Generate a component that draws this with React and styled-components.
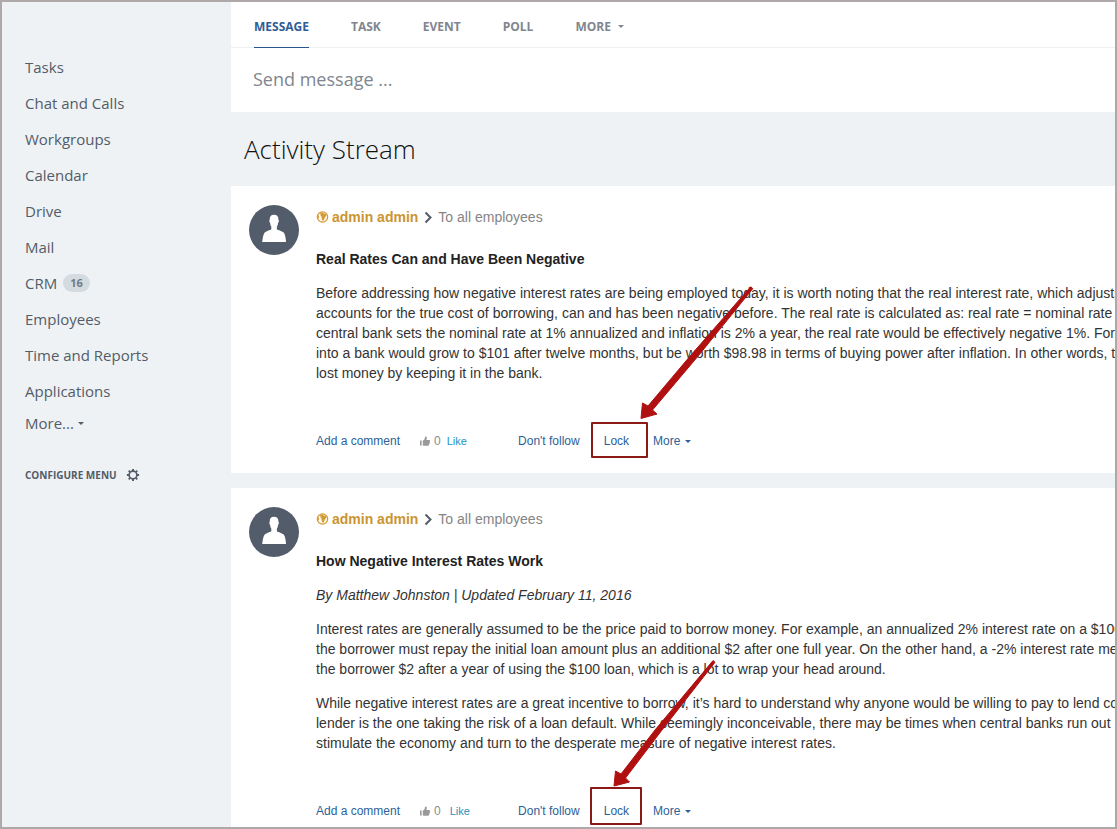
import styled, { createGlobalStyle, css } from 'styled-components';

const GlobalStyle = createGlobalStyle`
  *, *::before, *::after {
    box-sizing: border-box;
  }

  body {
    margin: 0;
    font-family: 'Liberation Sans', Arial, sans-serif;
    font-size: 14px;
    line-height: 20px;
    color: #333;
    background: #eef2f4;
  }

  a {
    color: inherit;
    text-decoration: none;
  }

  button, input {
    margin: 0;
    padding: 0;
    border: 0;
    font: inherit;
    color: inherit;
    background: none;
  }

  button {
    cursor: pointer;
    white-space: nowrap;
  }

  h1, h2, p, ul {
    margin: 0;
    padding: 0;
  }
`;

const Frame = styled.div`
  display: flex;
  height: 100vh;
  overflow: hidden;
  border: 2px solid #aea8a8;
  background: #eef2f4;
`;

/* ---------- sidebar ---------- */

const Sidebar = styled.nav`
  flex: 0 0 229px;
  padding: 47px 16px 0 23px;
  font-family: 'Open Sans', sans-serif;
  color: #535c69;
`;

const MenuList = styled.ul`
  list-style: none;
  font-size: 15px;
`;

const MenuItem = styled.li`
  display: flex;
  align-items: center;
  gap: 6px;
  height: 36px;
`;

const Counter = styled.span`
  padding: 0 7px;
  border-radius: 9px;
  font-size: 11px;
  font-weight: 700;
  line-height: 18px;
  color: #6f7a84;
  background: #d4dbe0;
`;

const MoreItems = styled.button`
  display: flex;
  align-items: center;
  gap: 4px;
  height: 28px;
  font-size: 15px;
`;

const Configure = styled.button`
  display: flex;
  align-items: center;
  gap: 9px;
  margin-top: 28px;
  font-size: 10px;
  font-weight: 700;
`;

const Caret = styled.span`
  width: 0;
  border: 3px solid transparent;
  border-top-color: currentColor;
  border-bottom: 0;
`;

/* ---------- main column ---------- */

const Main = styled.main`
  flex: 1;
  min-width: 0;
`;

const Composer = styled.section`
  font-family: 'Open Sans', sans-serif;
  background: #fff;
`;

const Tabs = styled.div`
  display: flex;
  gap: 42px;
  height: 46px;
  padding: 0 23px;
  border-bottom: 1px solid #edeff0;
`;

const Tab = styled.button`
  display: flex;
  align-items: center;
  gap: 7px;
  height: 46px;
  padding-top: 4px;
  border-bottom: 1px solid transparent;
  font-size: 12px;
  font-weight: 700;
  color: #80868e;

  ${({ $active }) => $active && css`
    color: #2f5d96;
    border-bottom-color: #2a5687;
  `}
`;

const MessageInput = styled.input`
  display: block;
  width: 100%;
  height: 64px;
  padding: 0 22px 2px;
  font-size: 18px;
  outline: none;

  &::placeholder {
    color: #80868e;
    opacity: 1;
  }
`;

const PageTitle = styled.h1`
  padding: 17px 13px;
  font-family: 'Open Sans', sans-serif;
  font-size: 26px;
  font-weight: 300;
  line-height: 40px;
  color: #111;
`;

const Feed = styled.div`
  display: flex;
  flex-direction: column;
  gap: 15px;
`;

const Card = styled.article`
  display: flex;
  gap: 17px;
  padding: 19px 0 22px 18px;
  background: #fff;
`;

const Body = styled.div`
  flex: 1;
  min-width: 0;
  padding-top: 2px;
`;

const PostHeader = styled.header`
  display: flex;
  align-items: center;
  margin-bottom: 22px;
`;

const Author = styled.a`
  display: flex;
  align-items: center;
  gap: 3px;
  font-weight: 700;
  color: #cb9431;
`;

const Chevron = styled.svg`
  margin: 0 4px 0 5px;
`;

const Recipient = styled.span`
  color: #858585;
`;

const PostTitle = styled.h2`
  font-size: 14px;
  line-height: 20px;
  color: #222;
`;

const Paragraph = styled.p`
  margin-top: 14px;
  white-space: nowrap;
  overflow: hidden;
  font-style: ${({ $italic }) => ($italic ? 'italic' : 'normal')};
`;

const Line = styled.span`
  display: block;
`;

const Actions = styled.footer`
  display: flex;
  align-items: center;
  margin-top: 48px;
  font-size: 12px;
  color: #2c5f97;
`;

const Votes = styled.div`
  display: flex;
  align-items: center;
  gap: 4px;
  flex: 0 0 98px;
  margin-left: 20px;
  color: #8c8c8c;
`;

const Like = styled.button`
  margin-left: ${({ $wide }) => ($wide ? 5 : 2)}px;
  font-size: 11px;
  color: #1f93c4;
`;

const Links = styled.div`
  display: flex;
  gap: 24px;
`;

const LockSlot = styled.div`
  position: relative;
`;

const MoreAction = styled.button`
  display: flex;
  align-items: center;
  gap: 5px;
`;

/* callout drawn over the post, anchored on the Lock link */
const Callout = styled.svg`
  position: absolute;
  left: -21px;
  bottom: -9px;
  overflow: visible;
  pointer-events: none;
`;

const Avatar = () => (
  <svg width="50" height="50" viewBox="0 0 50 50" role="img" aria-label="admin admin">
    <circle cx="25" cy="25" r="25" fill="#535c6b" />
    <path
      fill="#fff"
      d="M25 9.800c-3 0-4.500 1.900-4.300 5.100-.7.500-.4 2.300.4 2.900.2 1.900.6 3 1.200 3.800v2.600c-1.200 1.100-5.400 1.700-6.800 3.600-1.300 1.800-1.900 5.600-2.300 9.200h23.800c-.2-3.600-.8-7.400-2.100-9.200-1.400-1.900-5.800-2.500-7-3.600v-2.600c.6-.8 1-1.900 1.200-3.800.8-.6 1.100-2.400.4-2.900.1-3.200-1.500-5.100-4.500-5.100z"
    />
  </svg>
);

const Globe = () => (
  <svg width="13" height="13" viewBox="0 0 13 13" aria-hidden="true">
    <circle cx="6.500" cy="6" r="5.200" fill="#fdf6e6" stroke="#d39a35" strokeWidth="1.200" />
    <path
      fill="#d39a35"
      d="M3.400 2.200 4.800 3 4.200 4 5.300 5.200 6 8.400 7 9.900 8.300 8.200 8.800 6.400 10.400 4.600 9.600 2.400 7.800 2.700 6.700 1.500zM1.300 4.200 2.600 4.600 3.200 6.200 2.200 7.400 1.300 6.800z"
    />
  </svg>
);

const Thumb = () => (
  <svg width="10" height="11" viewBox="0 0 10 11" aria-hidden="true">
    <path
      fill="#999"
      d="M0 4.500h1.600V9.600H0zM2.800 4.600C4 4.200 4.800 2.800 5 1.200 5.100.3 6.700.4 6.800 1.700c.1.900-.2 1.700-.5 2.400H9c1.200 0 1.200 1.300.6 1.700.5.500.3 1.200-.2 1.400.3.600 0 1.200-.5 1.300.2.900-.3 1.300-1.200 1.300H4.300L2.800 9.400z"
    />
  </svg>
);

const Gear = () => (
  <svg width="14" height="14" viewBox="0 0 14 14" fill="none" stroke="#535c69" aria-hidden="true">
    <circle cx="7" cy="7" r="3.900" strokeWidth="1.700" />
    <path
      strokeWidth="1.900"
      d="M7 .9v2M7 11.100v2M.9 7h2M11.100 7h2M2.700 2.700l1.400 1.400M9.900 9.900l1.400 1.400M11.300 2.700 9.900 4.100M4.100 9.900l-1.400 1.400"
    />
  </svg>
);

const menu = [
  { label: 'Tasks' },
  { label: 'Chat and Calls' },
  { label: 'Workgroups' },
  { label: 'Calendar' },
  { label: 'Drive' },
  { label: 'Mail' },
  { label: 'CRM', count: 16 },
  { label: 'Employees' },
  { label: 'Time and Reports' },
  { label: 'Applications' },
];

const tabs = ['MESSAGE', 'TASK', 'EVENT', 'POLL'];

// box and arrow of each post share the callout's 200x180 canvas
const posts = [
  {
    id: 1,
    title: 'Real Rates Can and Have Been Negative',
    paragraphs: [
      [
        'Before addressing how negative interest rates are being employed today, it is worth noting that the real interest rate, which adjusts',
        'accounts for the true cost of borrowing, can and has been negative before. The real rate is calculated as: real rate = nominal rate -',
        'central bank sets the nominal rate at 1% annualized and inflation is 2% a year, the real rate would be effectively negative 1%. For',
        'into a bank would grow to $101 after twelve months, but be worth $98.98 in terms of buying power after inflation. In other words, the',
        'lost money by keeping it in the bank.',
      ],
    ],
    box: { x: 9, y: 143, width: 55, height: 34 },
    arrow: 'M58 138.500 59.500 123 65 126 108 75 167.700 6.800 169.800 8.600 116 75 69.500 130 74 134z',
  },
  {
    id: 2,
    title: 'How Negative Interest Rates Work',
    byline: 'By Matthew Johnston | Updated February 11, 2016',
    paragraphs: [
      [
        'Interest rates are generally assumed to be the price paid to borrow money. For example, an annualized 2% interest rate on a $100',
        'the borrower must repay the initial loan amount plus an additional $2 after one full year. On the other hand, a -2% interest rate means',
        'the borrower $2 after a year of using the $100 loan, which is a lot to wrap your head around.',
      ],
      [
        'While negative interest rates are a great incentive to borrow, it’s hard to understand why anyone would be willing to pay to lend co',
        'lender is the one taking the risk of a loan default. While seemingly inconceivable, there may be times when central banks run out',
        'stimulate the economy and turn to the desperate measure of negative interest rates.',
      ],
    ],
    wideLike: true,
    box: { x: 8, y: 138, width: 50, height: 36 },
    arrow: 'M31 136 32.500 121 38 124 72 80 130 10.600 132 12.300 79 80 42.500 128 46.500 132z',
  },
];

function Post({ post }) {
  return (
    <Card>
      <Avatar />
      <Body>
        <PostHeader>
          <Author href="#profile"><Globe />admin admin</Author>
          <Chevron width="11" height="14" viewBox="0 0 11 14" fill="none" stroke="#535c69" strokeWidth="2" aria-hidden="true">
            <path d="M2.500 2.500 7.500 7.500 2.500 12.500" />
          </Chevron>
          <Recipient>To all employees</Recipient>
        </PostHeader>
        <PostTitle>{post.title}</PostTitle>
        {post.byline && <Paragraph $italic>{post.byline}</Paragraph>}
        {post.paragraphs.map((lines, i) => (
          <Paragraph key={i}>
            {lines.map(line => <Line key={line}>{line}</Line>)}
          </Paragraph>
        ))}
        <Actions>
          <button type="button">Add a comment</button>
          <Votes>
            <Thumb />
            <span>0</span>
            <Like type="button" $wide={post.wideLike}>Like</Like>
          </Votes>
          <Links>
            <button type="button">Don't follow</button>
            <LockSlot>
              <button type="button">Lock</button>
              <Callout width="200" height="180" viewBox="0 0 200 180" aria-hidden="true">
                <rect {...post.box} fill="none" stroke="#8b1a17" strokeWidth="2" strokeLinejoin="round" />
                <path d={post.arrow} fill="#b01010" stroke="#b01010" strokeLinejoin="round" />
              </Callout>
            </LockSlot>
            <MoreAction type="button">More<Caret /></MoreAction>
          </Links>
        </Actions>
      </Body>
    </Card>
  );
}

export default function App() {
  return (
    <>
      <GlobalStyle />
      <Frame>
        <Sidebar>
          <MenuList>
            {menu.map(({ label, count }) => (
              <MenuItem key={label}>
                <a href="#menu">{label}</a>
                {count && <Counter>{count}</Counter>}
              </MenuItem>
            ))}
          </MenuList>
          <MoreItems type="button">More...<Caret /></MoreItems>
          <Configure type="button">CONFIGURE MENU<Gear /></Configure>
        </Sidebar>
        <Main>
          <Composer>
            <Tabs>
              {tabs.map((tab, i) => (
                <Tab key={tab} type="button" $active={i === 0}>{tab}</Tab>
              ))}
              <Tab type="button">MORE<Caret /></Tab>
            </Tabs>
            <MessageInput placeholder="Send message ..." aria-label="Send message" />
          </Composer>
          <PageTitle>Activity Stream</PageTitle>
          <Feed>
            {posts.map(post => <Post key={post.id} post={post} />)}
          </Feed>
        </Main>
      </Frame>
    </>
  );
}
